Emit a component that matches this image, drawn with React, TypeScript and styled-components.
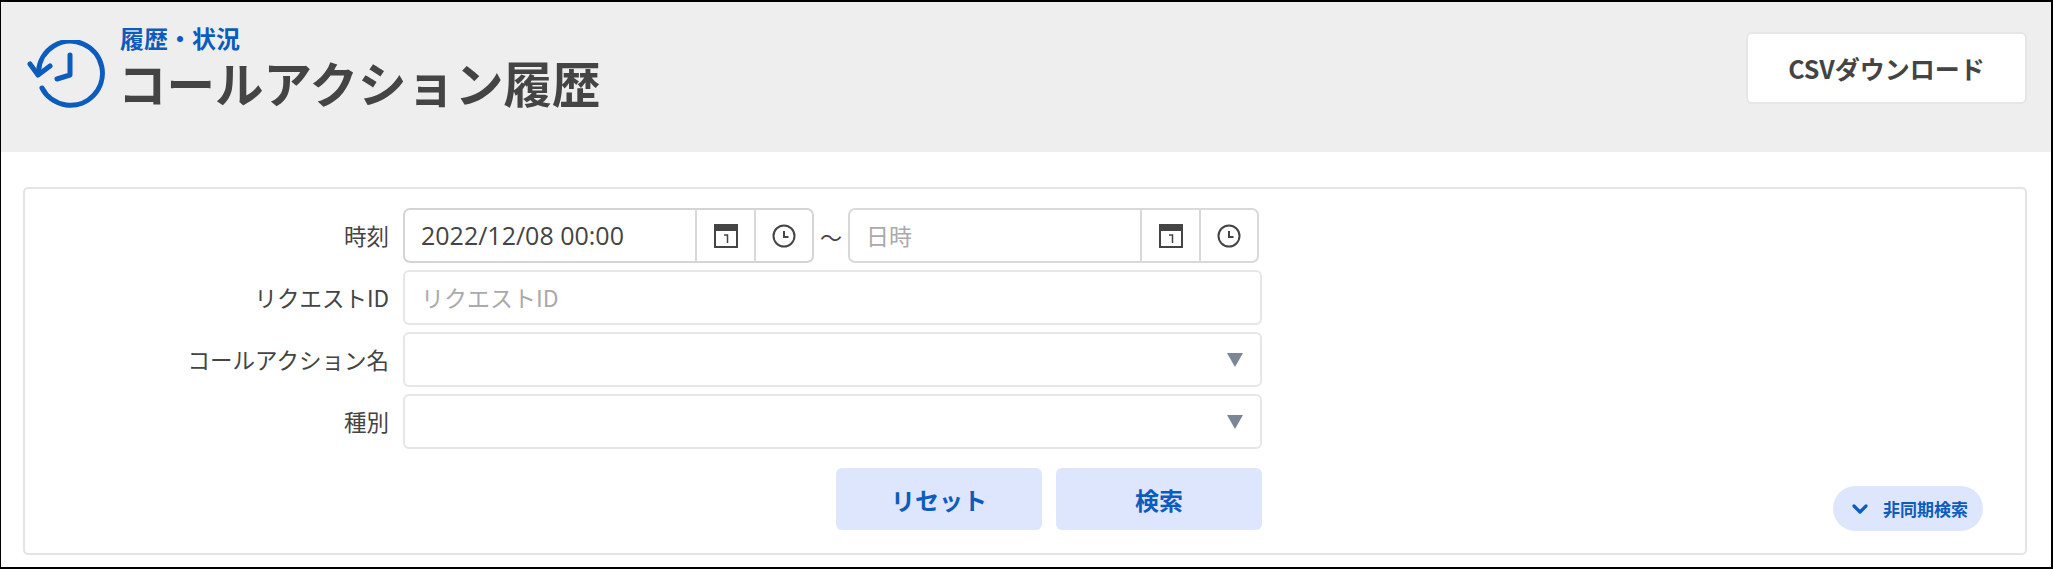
import React from 'react';
import styled, { createGlobalStyle } from 'styled-components';

const GlobalStyle = createGlobalStyle`
  html, body {
    margin: 0;
    padding: 0;
    background: #fff;
  }
  * {
    box-sizing: border-box;
  }
`;

const fontStack = `"Noto Sans CJK JP", "Noto Sans", sans-serif`;
const textColor = '#444';
const blue = '#0b5cbd';

const Frame = styled.div`
  width: 2053px;
  height: 569px;
  border: solid #000;
  border-width: 2px 2px 2px 1px;
  font-family: ${fontStack};
  color: ${textColor};
  background: #fff;
  overflow: hidden;
`;

const Header = styled.header`
  height: 150px;
  background: #eee;
  display: flex;
  align-items: flex-start;
  padding: 30px 24px 0 25px;
`;

const HistoryGlyph = styled.svg`
  width: 80px;
  height: 70px;
  margin-top: 8px;
  flex-shrink: 0;
`;

const TitleBlock = styled.div`
  margin-left: 12px;
  flex: 1;
  margin-top: -9px;
`;

const Eyebrow = styled.div`
  font-size: 24px;
  line-height: 30px;
  font-weight: 700;
  color: ${blue};
  padding-left: 2px;
`;

const Title = styled.h1`
  margin: 0;
  font-size: 48.5px;
  line-height: 58px;
  font-weight: 700;
  color: ${textColor};
`;

const DownloadButton = styled.button`
  width: 281px;
  height: 72px;
  background: #fff;
  border: 2px solid #e6e6e6;
  border-radius: 6px;
  font-family: inherit;
  font-size: 25px;
  font-weight: 700;
  color: ${textColor};
`;

const Panel = styled.section`
  margin: 35px 24px 0 22px;
  height: 368px;
  border: 2px solid #e4e4e4;
  border-radius: 5px;
  display: flex;
  justify-content: space-between;
  align-items: flex-end;
  padding: 19px 42px 22px 0;
`;

const Form = styled.form`
  align-self: flex-start;
  display: flex;
  flex-direction: column;
  gap: 7px;
`;

const Row = styled.div`
  display: grid;
  grid-template-columns: 364px 859px;
  column-gap: 14px;
  align-items: center;
`;

const Label = styled.label`
  text-align: right;
  font-size: 22.5px;
  line-height: 30px;
  padding-bottom: 2px;
  color: ${textColor};
`;

const DateRange = styled.div`
  display: flex;
  align-items: center;
`;

const Tilde = styled.span`
  width: 34px;
  text-align: center;
  font-size: 22px;
  color: ${textColor};
`;

const DateBox = styled.div<{ $active?: boolean }>`
  width: 411px;
  height: 55px;
  display: flex;
  border: 2px solid ${(p) => (p.$active ? '#d4d4d4' : '#d9d9d9')};
  border-radius: 7px;
  background: #fff;
`;

const DateInput = styled.input`
  flex: 1;
  min-width: 0;
  border: none;
  outline: none;
  background: transparent;
  padding: 0 16px 2px;
  font-family: "Open Sans", ${fontStack};
  font-size: 25px;
  color: ${textColor};

  &::placeholder {
    font-family: ${fontStack};
    font-size: 23px;
    color: #aaa;
    opacity: 1;
  }
`;

const IconCell = styled.div`
  width: 59px;
  flex-shrink: 0;
  border-left: 2px solid #d9d9d9;
  display: flex;
  align-items: center;
  justify-content: center;

  &:last-child {
    width: 58px;
  }
`;

const TextField = styled.input`
  width: 100%;
  height: 55px;
  border: 2px solid #e6e6e6;
  border-radius: 6px;
  outline: none;
  padding: 0 16px 2px;
  font-family: ${fontStack};
  font-size: 23px;
  color: ${textColor};

  &::placeholder {
    color: #aaa;
    opacity: 1;
  }
`;

const SelectBox = styled.div`
  width: 100%;
  height: 55px;
  border: 2px solid #e6e6e6;
  border-radius: 6px;
  display: flex;
  align-items: center;
  justify-content: flex-end;
  padding-right: 17px;
`;

const Actions = styled.div`
  display: flex;
  justify-content: flex-end;
  gap: 14px;
  margin-top: 12px;
  grid-column: 2;
`;

const ActionButton = styled.button`
  width: 206px;
  height: 62px;
  border: none;
  border-radius: 6px;
  background: #dee6fd;
  color: ${blue};
  font-family: inherit;
  font-size: 24px;
  font-weight: 700;
`;

const AsyncToggle = styled.button`
  width: 150px;
  height: 45px;
  border: none;
  border-radius: 23px;
  background: #dee6fd;
  color: ${blue};
  display: flex;
  align-items: center;
  gap: 15px;
  font-family: inherit;
  font-size: 17px;
  font-weight: 700;
  padding: 0 0 0 19px;
`;

const HistoryIcon = () => (
  <HistoryGlyph viewBox="0 0 80 70" fill="none" stroke={blue} strokeWidth="5" strokeLinecap="round" strokeLinejoin="round">
    <path d="M12.5 31 A32 32 0 1 1 16 48" />
    <path d="M4 24 L12 35 L24 26" />
    <path d="M44 15 V35 L31 39" />
  </HistoryGlyph>
);

const CalendarIcon = () => (
  <svg width="24" height="24" viewBox="0 0 24 24">
    <rect x="1" y="1" width="22" height="22" fill="#fff" stroke="#444" strokeWidth="2" />
    <rect x="1" y="1" width="22" height="6" fill="#444" />
    <path d="M10 11 H13.5 V19" fill="none" stroke="#444" strokeWidth="1.5" />
  </svg>
);

const ClockIcon = () => (
  <svg width="24" height="24" viewBox="0 0 24 24" fill="none" stroke="#444" strokeWidth="2">
    <circle cx="12" cy="12" r="10.5" />
    <path d="M12 7 V13 H16.5" />
  </svg>
);

const Caret = () => (
  <svg width="16" height="14" viewBox="0 0 16 14">
    <path d="M0 0 H16 L8 14 Z" fill="#7b8794" />
  </svg>
);

const ChevronIcon = () => (
  <svg width="16" height="10" viewBox="0 0 16 10" fill="none" stroke={blue} strokeWidth="3.2" strokeLinecap="round" strokeLinejoin="round">
    <path d="M2 2 L8 8 L14 2" />
  </svg>
);

const DateField = ({ value, placeholder, active }: { value?: string; placeholder?: string; active?: boolean }) => (
  <DateBox $active={active}>
    <DateInput defaultValue={value} placeholder={placeholder} />
    <IconCell>
      <CalendarIcon />
    </IconCell>
    <IconCell>
      <ClockIcon />
    </IconCell>
  </DateBox>
);

export default function App() {
  return (
    <Frame>
      <GlobalStyle />
      <Header>
        <HistoryIcon />
        <TitleBlock>
          <Eyebrow>履歴・状況</Eyebrow>
          <Title>コールアクション履歴</Title>
        </TitleBlock>
        <DownloadButton type="button">CSVダウンロード</DownloadButton>
      </Header>
      <Panel>
        <Form>
          <Row>
            <Label>時刻</Label>
            <DateRange>
              <DateField value="2022/12/08 00:00" active />
              <Tilde>〜</Tilde>
              <DateField placeholder="日時" />
            </DateRange>
          </Row>
          <Row>
            <Label>リクエストID</Label>
            <TextField placeholder="リクエストID" />
          </Row>
          <Row>
            <Label>コールアクション名</Label>
            <SelectBox>
              <Caret />
            </SelectBox>
          </Row>
          <Row>
            <Label>種別</Label>
            <SelectBox>
              <Caret />
            </SelectBox>
          </Row>
          <Row>
            <Actions>
              <ActionButton type="button">リセット</ActionButton>
              <ActionButton type="button">検索</ActionButton>
            </Actions>
          </Row>
        </Form>
        <AsyncToggle type="button">
          <ChevronIcon />
          非同期検索
        </AsyncToggle>
      </Panel>
    </Frame>
  );
}
